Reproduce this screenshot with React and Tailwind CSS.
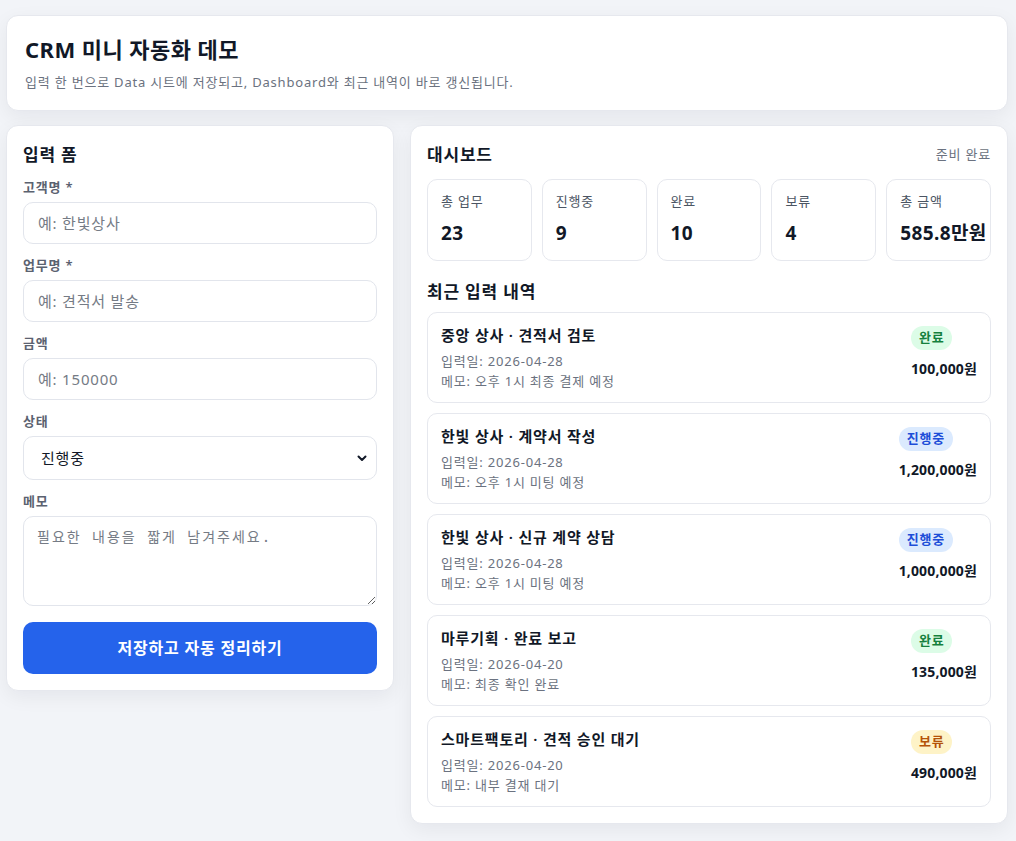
import React from 'react';

const stats = [
  { label: '총 업무', value: '23' },
  { label: '진행중', value: '9' },
  { label: '완료', value: '10' },
  { label: '보류', value: '4' },
  { label: '총 금액', value: '585.8만원' },
];

const recent = [
  { title: '중앙 상사 · 견적서 검토', date: '2026-04-28', memo: '오후 1시 최종 결제 예정', status: '완료', amount: '100,000원' },
  { title: '한빛 상사 · 계약서 작성', date: '2026-04-28', memo: '오후 1시 미팅 예정', status: '진행중', amount: '1,200,000원' },
  { title: '한빛 상사 · 신규 계약 상담', date: '2026-04-28', memo: '오후 1시 미팅 예정', status: '진행중', amount: '1,000,000원' },
  { title: '마루기획 · 완료 보고', date: '2026-04-20', memo: '최종 확인 완료', status: '완료', amount: '135,000원' },
  { title: '스마트팩토리 · 견적 승인 대기', date: '2026-04-20', memo: '내부 결재 대기', status: '보류', amount: '490,000원' },
];

const badgeStyle = {
  완료: 'bg-[#dcfce7] text-[#15803d]',
  진행중: 'bg-[#dbeafe] text-[#1d4ed8]',
  보류: 'bg-[#fef3c7] text-[#b45309]',
};

const card = 'bg-white border border-[#e6e8ee] rounded-[12px] shadow-[0_6px_20px_rgba(15,23,42,0.06)]';
const field = 'w-full h-[42px] px-[14px] rounded-[10px] border border-[#e2e5ec] bg-white text-[15px] text-[#111827] placeholder:text-[#757b85] outline-none';

const Label = ({ children }) => (
  <label className="block text-[13px] leading-[20px] font-semibold text-[#5b6270] mb-[5px]">{children}</label>
);

const App = () => {
  return (
    <div className="min-h-screen bg-[#f2f4f8] pl-[6px] pr-[8px] pt-[15px] pb-[18px] font-['Noto_Sans','Noto_Sans_CJK_KR',sans-serif] tracking-[0.05em] text-[#111827]">
      {/* Header */}
      <header className={`${card} px-[18px] pt-[18px] pb-[18px]`}>
        <h1 className="text-[22px] leading-[30px] font-bold tracking-[0.02em]">CRM 미니 자동화 데모</h1>
        <p className="mt-[8px] text-[13px] leading-[20px] text-[#6b7280]">
          입력 한 번으로 Data 시트에 저장되고, Dashboard와 최근 내역이 바로 갱신됩니다.
        </p>
      </header>

      <div className="mt-[14px] grid grid-cols-[388px_1fr] gap-[16px] items-start">
        {/* Input form */}
        <section className={`${card} p-[16px]`}>
          <h2 className="text-[17px] leading-[26px] font-semibold">입력 폼</h2>
          <div className="mt-[9px] flex flex-col gap-[11px]">
            <div>
              <Label>고객명 *</Label>
              <input className={field} placeholder="예: 한빛상사" />
            </div>
            <div>
              <Label>업무명 *</Label>
              <input className={field} placeholder="예: 견적서 발송" />
            </div>
            <div>
              <Label>금액</Label>
              <input className={field} placeholder="예: 150000" />
            </div>
            <div>
              <Label>상태</Label>
              <div className="relative">
                <select className={`${field} h-[44px] appearance-none pl-[17px]`} defaultValue="진행중">
                  <option>진행중</option>
                  <option>완료</option>
                  <option>보류</option>
                </select>
                <svg className="pointer-events-none absolute right-[9px] top-1/2 -translate-y-1/2" width="12" height="12" viewBox="0 0 12 12" fill="none">
                  <path d="M2.5 4.5 6 8l3.5-3.5" stroke="#111827" strokeWidth="2" strokeLinecap="round" strokeLinejoin="round" />
                </svg>
              </div>
            </div>
            <div>
              <Label>메모</Label>
              <textarea
                className="w-full h-[90px] block px-[13px] py-[10px] rounded-[10px] border border-[#e2e5ec] text-[14px] leading-[20px] tracking-[2px] font-['DejaVu_Sans_Mono','Noto_Sans_CJK_KR',monospace] placeholder:text-[#757b85] outline-none"
                placeholder="필요한 내용을 짧게 남겨주세요."
              />
            </div>
          </div>
          <button className="mt-[16px] w-full h-[52px] rounded-[10px] bg-[#2563eb] text-white text-[16px] font-bold">
            저장하고 자동 정리하기
          </button>
        </section>

        {/* Dashboard */}
        <section className={`${card} p-[16px]`}>
          <div className="flex items-center justify-between">
            <h2 className="text-[17px] leading-[26px] font-semibold">대시보드</h2>
            <span className="text-[13px] text-[#6b7280]">준비 완료</span>
          </div>
          <div className="mt-[11px] grid grid-cols-5 gap-[10px]">
            {stats.map((s) => (
              <div key={s.label} className="border border-[#e6e8ee] rounded-[10px] px-[13px] pt-[11px] pb-[14px] whitespace-nowrap">
                <div className="text-[13px] leading-[20px] text-[#4b5563]">{s.label}</div>
                <div className="mt-[9px] text-[19px] leading-[26px] font-bold tracking-[0.02em]">{s.value}</div>
              </div>
            ))}
          </div>

          <h2 className="mt-[18px] text-[17px] leading-[26px] font-semibold">최근 입력 내역</h2>
          <div className="mt-[7px] flex flex-col gap-[10px]">
            {recent.map((r) => (
              <div key={r.title} className="border border-[#e6e8ee] rounded-[10px] px-[13px] py-[11px] flex justify-between items-start">
                <div>
                  <div className="text-[15px] leading-[22px] font-semibold">{r.title}</div>
                  <div className="mt-[5px] text-[13px] leading-[20px] text-[#6b7280]">입력일: {r.date}</div>
                  <div className="text-[13px] leading-[20px] text-[#6b7280]">메모: {r.memo}</div>
                </div>
                <div className="mt-[2px] flex flex-col items-start gap-[9px]">
                  <span className={`inline-flex h-[24px] items-center px-[8px] rounded-full text-[13px] font-semibold ${badgeStyle[r.status]}`}>
                    {r.status}
                  </span>
                  <span className="text-[14px] leading-[20px] font-bold tracking-[0.01em]">{r.amount}</span>
                </div>
              </div>
            ))}
          </div>
        </section>
      </div>
    </div>
  );
};

export default App;
